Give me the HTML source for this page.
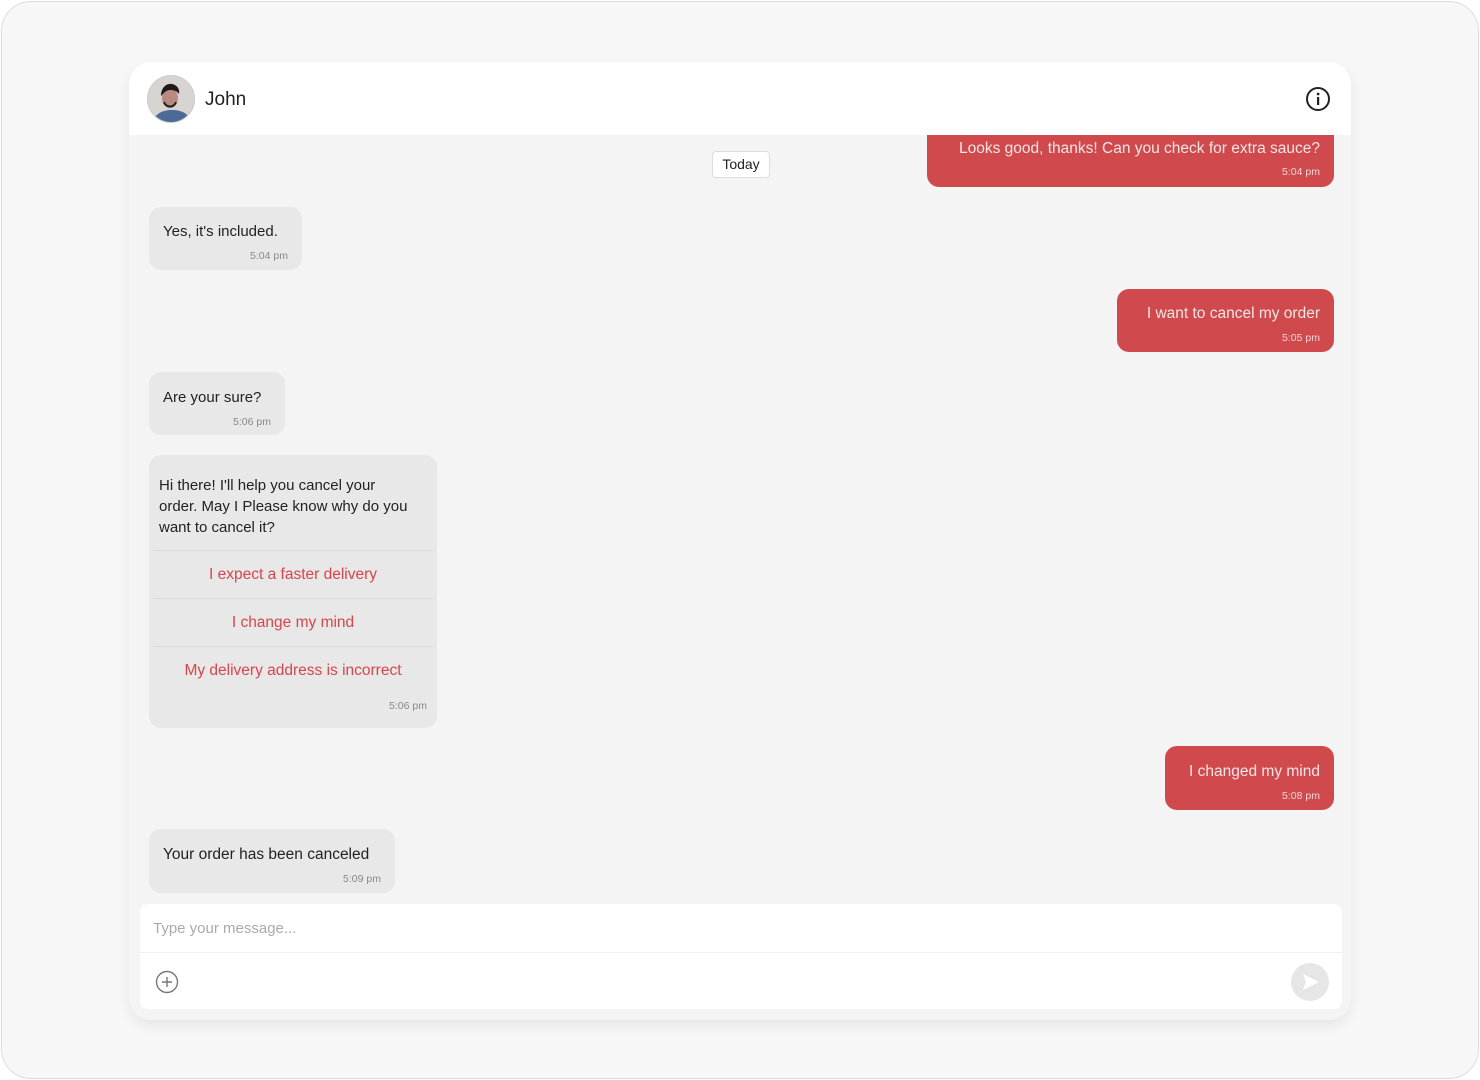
<!DOCTYPE html>
<html><head><meta charset="utf-8"><style>
*{margin:0;padding:0;box-sizing:border-box}
body{width:1480px;height:1080px;background:#fff;font-family:"Liberation Sans",sans-serif;position:relative;overflow:hidden}
.page{position:absolute;left:1px;top:1px;width:1478px;height:1078px;border:1px solid #ddd;border-radius:30px;background:#f7f7f7}
.card{position:absolute;left:129px;top:62px;width:1222px;height:958px;background:#f4f4f4;border-radius:22px;box-shadow:0 6px 14px rgba(0,0,0,.07);overflow:hidden}
.hdr{position:absolute;left:0;top:0;width:1222px;height:73px;background:#fff;z-index:2}
.av{position:absolute;left:18px;top:13px;width:48px;height:48px;border-radius:50%;overflow:hidden;background:#ccc;border:1px solid #ccc}
.name{position:absolute;left:76px;top:27px;font-size:19px;color:#222}
.info{position:absolute;right:20px;top:24px}
.b{position:absolute;border-radius:12px;font-size:15px;color:#222;padding:0 14px}
.l{background:#e8e8e8}
.r{background:#d0494d;color:#f6e6e6;text-align:right}
.t{position:absolute;right:14px;font-size:10.5px;color:#888}
.r .t{color:#f0dada}
.b p{position:absolute;white-space:nowrap}
.today{position:absolute;left:583px;top:89px;width:58px;height:27px;border:1px solid #ddd;border-radius:4px;background:#fff;font-size:14px;text-align:center;line-height:25px;color:#222}
.opt{position:absolute;left:4px;width:280px;height:48px;border-top:1px solid #ddd;color:#d9454b;text-align:center;line-height:48px;font-size:15.5px}
.inp{position:absolute;left:11px;top:842px;width:1202px;height:105px;background:#fff;border-radius:8px}
</style></head><body>
<div class="page"></div>
<div class="card">
 <div class="hdr">
  <div class="av"><svg width="48" height="48" viewBox="0 0 48 48"><rect width="48" height="48" fill="#d8d4d2"/><path d="M4 48c2-10 10-14 20-14s18 4 20 14z" fill="#4b6a96"/><ellipse cx="22" cy="22" rx="8" ry="10" fill="#b98a80"/><path d="M13 20c0-9 6-13 11-12s8 5 7 10c-2-3-5-4-9-4s-6 3-9 6z" fill="#1e1a1a"/><path d="M16 26c2 6 10 6 12 0" fill="none" stroke="#222" stroke-width="2"/></svg></div>
  <div class="name">John</div>
  <svg class="info" width="26" height="26" viewBox="0 0 26 26"><circle cx="13" cy="13" r="11" fill="none" stroke="#222" stroke-width="2"/><rect x="12" y="11" width="2.2" height="8" fill="#222"/><circle cx="13.1" cy="8" r="1.4" fill="#222"/></svg>
 </div>
 <div class="today">Today</div>
 <div class="b r" style="left:798px;top:60px;width:407px;height:65px;border-radius:0 0 12px 12px"><p style="right:14px;top:18px;font-size:15.5px">Looks good, thanks! Can you check for extra sauce?</p><span class="t" style="top:44px">5:04 pm</span></div>
 <div class="b l" style="left:20px;top:145px;width:153px;height:63px"><p style="left:14px;top:16px">Yes, it's included.</p><span class="t" style="top:43px">5:04 pm</span></div>
 <div class="b r" style="left:988px;top:227px;width:217px;height:63px"><p style="right:14px;top:16px;font-size:15.5px">I want to cancel my order</p><span class="t" style="top:43px">5:05 pm</span></div>
 <div class="b l" style="left:20px;top:310px;width:136px;height:63px"><p style="left:14px;top:17px">Are your sure?</p><span class="t" style="top:44px">5:06 pm</span></div>
 <div class="b l" style="left:20px;top:393px;width:288px;height:273px;padding:0"><div style="position:absolute;left:10px;top:20px;width:250px;line-height:21px">Hi there! I'll help you cancel your order. May I Please know why do you want to cancel it?</div>
  <div class="opt" style="top:95px">I expect a faster delivery</div>
  <div class="opt" style="top:143px">I change my mind</div>
  <div class="opt" style="top:191px">My delivery address is incorrect</div>
  <span class="t" style="top:245px;right:10px">5:06 pm</span></div>
 <div class="b r" style="left:1036px;top:684px;width:169px;height:64px"><p style="right:14px;top:17px;font-size:15.5px">I changed my mind</p><span class="t" style="top:44px">5:08 pm</span></div>
 <div class="b l" style="left:20px;top:767px;width:246px;height:64px"><p style="left:14px;top:17px;font-size:15.5px">Your order has been canceled</p><span class="t" style="top:44px">5:09 pm</span></div>
 <div class="inp">
  <div style="position:absolute;left:13px;top:16px;font-size:15px;color:#aaa">Type your message...</div>
  <div style="position:absolute;left:0;top:48px;width:100%;border-top:1px solid #f0f0f0"></div>
  <svg style="position:absolute;left:15px;top:66px" width="24" height="24" viewBox="0 0 24 24"><circle cx="12" cy="12" r="10.5" fill="none" stroke="#777" stroke-width="1.4"/><path d="M12 7v10M7 12h10" stroke="#777" stroke-width="1.4"/></svg>
  <svg style="position:absolute;left:1150px;top:58px" width="40" height="40" viewBox="0 0 40 40"><circle cx="20" cy="20" r="19" fill="#e6e6e6"/><path d="M13 12l16 8-16 8 3-8z" fill="#fff"/></svg>
 </div>
</div>
</body></html>
